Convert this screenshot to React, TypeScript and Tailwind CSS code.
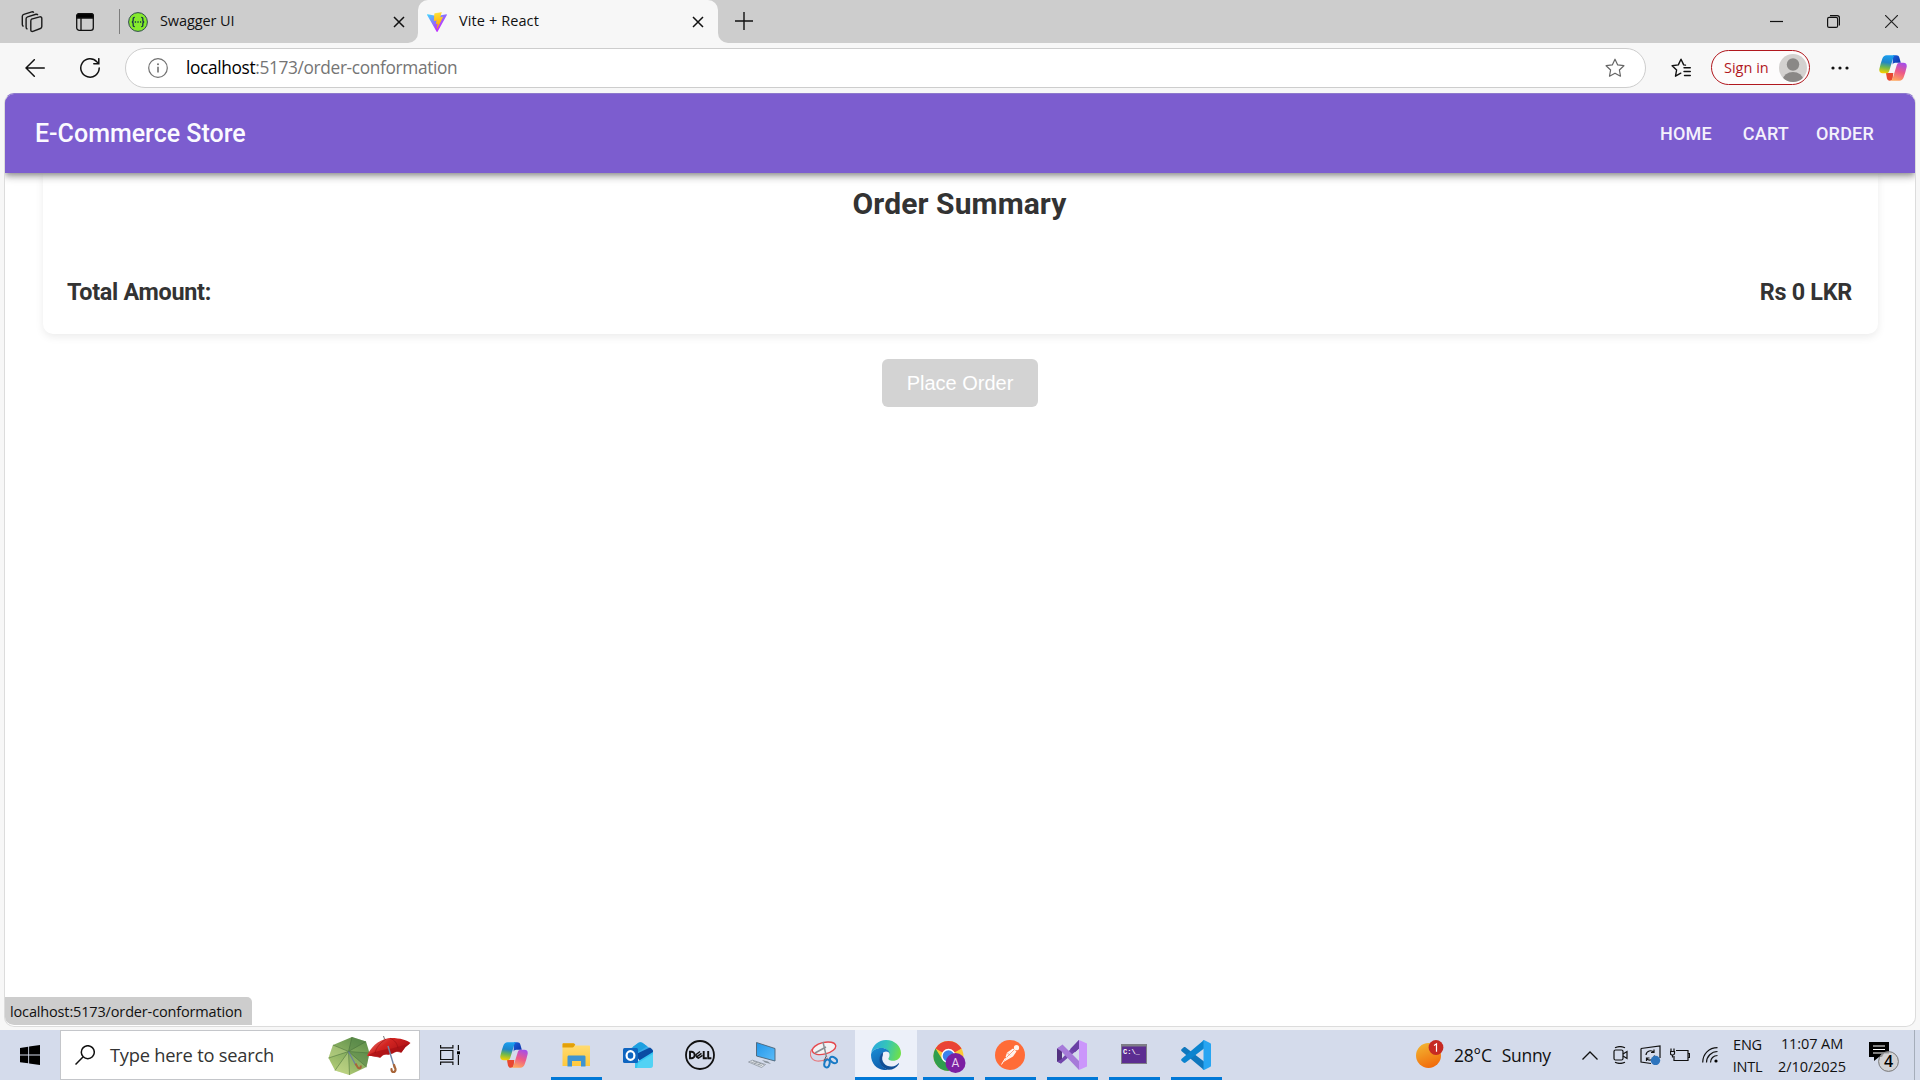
import type { ReactNode } from "react";

const ui = "font-['Open_Sans','Noto_Sans',sans-serif]";

function CopilotIcon({ id, className }: { id: string; className: string }) {
  return (
    <svg viewBox="0 0 28 26" className={className}>
      <defs>
        <linearGradient id={`${id}a`} x1="0.5" y1="0" x2="0.35" y2="1">
          <stop offset="0" stopColor="#1a9ff0" />
          <stop offset="0.4" stopColor="#1f86c9" />
          <stop offset="0.68" stopColor="#6fb84e" />
          <stop offset="1" stopColor="#f5d000" />
        </linearGradient>
        <linearGradient id={`${id}b`} x1="0.7" y1="0" x2="0.35" y2="1">
          <stop offset="0" stopColor="#a64ee8" />
          <stop offset="0.5" stopColor="#ee5a86" />
          <stop offset="1" stopColor="#ffa85c" />
        </linearGradient>
        <linearGradient id={`${id}c`} x1="0" y1="0" x2="1" y2="1">
          <stop offset="0" stopColor="#1c5fd8" />
          <stop offset="1" stopColor="#0b2fa8" />
        </linearGradient>
      </defs>
      <path d="M14 0.3h3.2c1.7 0 2.7.8 3.2 2.4l1.4 5.1h-5.6c-1.2 0-2.2.7-2.6 1.9z" fill={`url(#${id}c)`} />
      <path d="M8.5 18h5.8l-.6 5c-.3 1.7-1.2 2.7-3 2.7-1.5 0-2.4-.9-2.8-2.4L7 18z" fill="#e8472f" />
      <path d="M7.6.3H17c-1.5 0-2.3 1-2.8 2.6l-4 13c-.5 1.6-1.4 2.3-3 2.3H3.6C1 18.2-.2 16.5.4 13.7c.7-3.2 1.7-6.7 2.9-10C4.1 1.5 5.5.3 7.6.3z" fill={`url(#${id}a)`} />
      <path d="M20.4 25.7H11c1.5 0 2.3-1 2.8-2.6l4-13c.5-1.6 1.4-2.3 3-2.3h3.6c2.6 0 3.8 1.7 3.2 4.5-.7 3.2-1.7 6.7-2.9 10-.8 2.2-2.2 3.4-4.3 3.4z" fill={`url(#${id}b)`} />
    </svg>
  );
}

function CloseX({ className }: { className: string }) {
  return (
    <svg viewBox="0 0 12 12" className={className} fill="none" stroke="#111" strokeWidth="1.5">
      <path d="M1 1l10 10M11 1L1 11" />
    </svg>
  );
}

function TabStrip() {
  return (
    <div className="flex h-[43px] shrink-0 bg-[#cdcdcd]">
      <div className="flex w-[119px] items-center pl-[21px]">
        <svg viewBox="0 0 22 22" className="h-[22px] w-[22px]" fill="none" stroke="#1b1b1b" strokeWidth="1.4">
          <path d="M10.5 8.2l8.2-2.3c1.2-.3 2.1.3 2.1 1.5v8.2c0 1-.5 1.7-1.4 1.9l-7.5 2.9c-1.2.4-2.1-.2-2.1-1.5v-8.6c0-1.1.3-1.8.7-2.1z" />
          <path d="M6.5 18.2c-1-.3-1.4-1-1.4-2V7.8c0-1 .5-1.7 1.5-2l8.3-2.5c.9-.2 1.6.1 1.9.8" />
          <path d="M2.6 15.3c-.9-.3-1.3-.9-1.3-1.9V5.3c0-1 .5-1.7 1.5-2l8-2.4c.9-.2 1.6.1 1.9.8" />
        </svg>
        <svg viewBox="0 0 18 18" className="ml-[33px] h-[18px] w-[18px]" fill="none" stroke="#111" strokeWidth="1.3">
          <rect x="0.7" y="0.7" width="16.6" height="16.6" rx="2.6" />
          <path d="M.7 5V3A2.3 2.3 0 013 .7h12A2.3 2.3 0 0117.3 3v2z" fill="#000" />
          <path d="M5 5v12.3" />
        </svg>
      </div>
      <div className="mt-[9px] h-[25px] w-px bg-[#7d7d7d]" />
      <div className="flex w-[298px] items-center pl-2">
        <svg viewBox="0 0 20 20" className="mt-px h-5 w-5">
          <circle cx="10" cy="10" r="9.4" fill="#85ea2d" stroke="#2f4a52" strokeWidth="1" />
          <g fill="none" stroke="#173647" strokeWidth="1.3">
            <path d="M6.8 5.3c-1.5 0-1.7.7-1.6 2 .1 1.4 0 2.5-1.3 2.7 1.3.2 1.4 1.3 1.3 2.7-.1 1.3.1 2 1.6 2" />
            <path d="M13.2 5.3c1.5 0 1.7.7 1.6 2-.1 1.4 0 2.5 1.3 2.7-1.3.2-1.4 1.3-1.3 2.7.1 1.3-.1 2-1.6 2" />
          </g>
          <path d="M6.8 10h1.3M9.4 10h1.3M12 10h1.2" stroke="#173647" strokeWidth="1.3" />
        </svg>
        <span className={`${ui} ml-3 -mt-px grow text-[14.5px] tracking-[-0.1px] text-[#111]`}>Swagger UI</span>
        <CloseX className="mr-[13px] mt-px h-3 w-3" />
      </div>
      <div className="relative flex w-[300px] items-center rounded-t-[10px] bg-[#f7f7f7] pl-[9px]">
        <div className="absolute -left-[10px] bottom-0 h-[10px] w-[10px] bg-[#f7f7f7]">
          <div className="h-full w-full rounded-br-[10px] bg-[#cdcdcd]" />
        </div>
        <div className="absolute -right-[10px] bottom-0 h-[10px] w-[10px] bg-[#f7f7f7]">
          <div className="h-full w-full rounded-bl-[10px] bg-[#cdcdcd]" />
        </div>
        <svg viewBox="0 0 256 257" className="mt-px h-5 w-5">
          <defs>
            <linearGradient id="vite1" x1="-.828%" x2="57.636%" y1="7.652%" y2="78.411%">
              <stop offset="0%" stopColor="#41D1FF" />
              <stop offset="100%" stopColor="#BD34FE" />
            </linearGradient>
            <linearGradient id="vite2" x1="43.376%" x2="50.316%" y1="2.242%" y2="89.030%">
              <stop offset="0%" stopColor="#FFEA83" />
              <stop offset="8.333%" stopColor="#FFDD35" />
              <stop offset="100%" stopColor="#FFA800" />
            </linearGradient>
          </defs>
          <path fill="url(#vite1)" d="M255.153 37.938L134.897 252.976c-2.483 4.44-8.862 4.466-11.382.048L.875 37.958c-2.746-4.814 1.371-10.646 6.827-9.67l120.385 21.517a6.537 6.537 0 0 0 2.322-.004l117.867-21.483c5.438-.991 9.574 4.796 6.877 9.62Z" />
          <path fill="url(#vite2)" d="M185.432.063L96.44 17.501a3.268 3.268 0 0 0-2.634 3.014l-5.474 92.456a3.268 3.268 0 0 0 3.997 3.378l24.777-5.718c2.318-.535 4.413 1.507 3.936 3.838l-7.361 36.047c-.495 2.426 1.782 4.5 4.151 3.78l15.304-4.649c2.372-.72 4.652 1.36 4.15 3.788l-11.698 56.621c-.732 3.542 3.979 5.473 5.943 2.437l1.313-2.028l72.516-144.72c1.215-2.423-.88-5.186-3.54-4.672l-25.505 4.922c-2.396.462-4.435-1.77-3.759-4.114l16.646-57.705c.677-2.35-1.37-4.583-3.769-4.113Z" />
        </svg>
        <span className={`${ui} ml-3 -mt-px grow text-[14.5px] tracking-[0.1px] text-[#111]`}>Vite + React</span>
        <CloseX className="mr-[14px] mt-px h-3 w-3" />
      </div>
      <div className="flex grow items-center pl-[17px]">
        <svg viewBox="0 0 18 18" className="-mt-[2px] h-[18px] w-[18px]" stroke="#111" strokeWidth="1.4">
          <path d="M9 0v18M0 9h18" />
        </svg>
      </div>
      <div className="flex w-[150px] items-center">
        <svg viewBox="0 0 13 13" className="h-[13px] w-[13px]" stroke="#111" strokeWidth="1.2">
          <path d="M0 6.5h13" />
        </svg>
        <svg viewBox="0 0 13 13" className="ml-11 h-[13px] w-[13px]" fill="none" stroke="#111" strokeWidth="1.2">
          <rect x="0.6" y="2.4" width="10" height="10" rx="1.5" />
          <path d="M3 .6h7.2a2.2 2.2 0 012.2 2.2V10.5" />
        </svg>
        <svg viewBox="0 0 13 13" className="ml-[45px] h-[13px] w-[13px]" stroke="#222" strokeWidth="1.2">
          <path d="M0 0l13 13M13 0L0 13" />
        </svg>
      </div>
    </div>
  );
}

const starPath = "M10 1.2l2.7 5.7 6.2.8-4.5 4.3 1.1 6.2L10 15.2l-5.5 3 1.1-6.2L1.1 7.7l6.2-.8z";

function Toolbar() {
  return (
    <div className="flex h-[50px] shrink-0 items-center bg-[#f7f7f7]">
      <svg viewBox="0 0 20 18" className="ml-[25px] h-[18px] w-5" fill="none" stroke="#111" strokeWidth="1.5" strokeLinecap="round">
        <path d="M19.3 9H1M9.3.7L1 9l8.3 8.3" />
      </svg>
      <svg viewBox="0 0 20 20" className="ml-[35px] h-5 w-5" fill="none" stroke="#111" strokeWidth="1.5" strokeLinecap="round">
        <path d="M19.2 10A9.2 9.2 0 1116.8 3.8L18.5 5.5M18.8.7v5.1h-5" />
      </svg>
      <div className="ml-[25px] flex h-10 w-[1521px] items-center rounded-full border border-[#cdcdcd] bg-white">
        <svg viewBox="0 0 20 20" className="ml-[22px] h-5 w-5" fill="none" stroke="#717171" strokeWidth="1.2">
          <circle cx="10" cy="10" r="9.3" />
          <path d="M10 8.8v5.7" strokeWidth="1.6" />
          <circle cx="10" cy="6.2" r="1" fill="#717171" stroke="none" />
        </svg>
        <span className={`${ui} ml-[18px] grow text-[17.3px] leading-6 tracking-[-0.35px] text-[#757575]`}>
          <span className="text-black">localhost</span>:5173/order-conformation
        </span>
        <svg viewBox="0 0 20 20" className="mr-5 h-5 w-5" fill="none" stroke="#666" strokeWidth="1.2" strokeLinejoin="round">
          <path d={starPath} />
        </svg>
      </div>
      <svg viewBox="0 0 20 20" className="ml-[25px] h-5 w-5" fill="none" stroke="#111" strokeWidth="1.4" strokeLinejoin="round" strokeLinecap="round">
        <path d="M9.8 15.2l-5.3 3 1.1-6.2L1.1 7.7l6.2-.8L10 1.2l2.7 5.7 1.8.2M13 9.8h6.3M13 13.5h6.3M13.5 17.5h5.8" />
      </svg>
      <div className="-mt-px ml-5 flex h-[35px] w-[99px] items-center rounded-full border border-[#b1181e] bg-[#fdfcfc]">
        <span className={`${ui} ml-3 w-[55px] whitespace-nowrap text-[14.5px] text-[#b1181e]`}>Sign in</span>
        <svg viewBox="0 0 28 28" className="h-7 w-7">
          <defs>
            <clipPath id="avatar"><circle cx="14" cy="14" r="14" /></clipPath>
          </defs>
          <g clipPath="url(#avatar)">
            <rect width="28" height="28" fill="#d3d1cf" />
            <circle cx="14" cy="10.5" r="6.2" fill="#8a8886" />
            <ellipse cx="14" cy="25.5" rx="10" ry="7.5" fill="#8a8886" />
          </g>
        </svg>
      </div>
      <svg viewBox="0 0 18 4" className="ml-[21px] h-1 w-[18px]" fill="#111">
        <circle cx="2" cy="2" r="1.6" /><circle cx="9" cy="2" r="1.6" /><circle cx="16" cy="2" r="1.6" />
      </svg>
      <CopilotIcon id="cpt" className="ml-[30px] h-[26px] w-7" />
    </div>
  );
}

function StorePage() {
  return (
    <div className="h-[937px] shrink-0 bg-[#f7f7f7] px-1 pb-[3px]">
      <div className="relative flex h-[934px] flex-col overflow-hidden rounded-[10px] border border-[#dcdcdc] border-t-[#8d79cc] bg-white font-[Roboto,sans-serif]">
        <header className="z-10 flex h-[79px] shrink-0 items-center bg-[#7c5dcf] pl-[30px] pr-[41px] shadow-[0_2px_5px_-1px_rgba(0,0,0,0.3),0_5px_6px_0_rgba(0,0,0,0.16),0_1px_12px_0_rgba(0,0,0,0.14)]">
          <h1 className="text-[25px] font-medium text-[#fbfaff]">E-Commerce Store</h1>
          <nav className="ml-auto flex text-[18px] font-medium tracking-[0.2px] text-[#f4f1fc]">
            <a>HOME</a>
            <a className="ml-[31px]">CART</a>
            <a className="ml-[27px]">ORDER</a>
          </nav>
        </header>
        <main className="pl-[38px] pr-[37px] text-[#333]">
          <section className="h-[161px] rounded-b-[10px] bg-white pl-6 pr-[26px] pt-[13px] shadow-[0_3px_8px_rgba(0,0,0,0.08)]">
            <h2 className="text-center text-[30px] font-bold leading-9 tracking-[0.1px]">Order Summary</h2>
            <div className="mt-14 flex justify-between text-[23.4px] font-bold leading-7 tracking-[-0.28px]">
              <span>Total Amount:</span>
              <span>Rs 0 LKR</span>
            </div>
          </section>
          <div className="mr-px mt-[25px] flex justify-center">
            <button className="h-12 w-[156px] rounded-md bg-[#d3d3d3] font-['Liberation_Sans',sans-serif] text-[20px] text-white">Place Order</button>
          </div>
        </main>
        <div className={`${ui} absolute -left-px bottom-px flex h-7 w-[248px] items-center rounded-bl-[10px] rounded-tr-[5px] bg-[#cdcdcd] pl-[6px] text-[14.5px] tracking-[-0.15px] text-[#111]`}>
          <span className="mt-px whitespace-nowrap">localhost:5173/order-conformation</span>
        </div>
      </div>
    </div>
  );
}

function Slot({ children, active, running, className = "" }: { children: ReactNode; active?: boolean; running?: boolean; className?: string }) {
  return (
    <div className={`relative flex h-[50px] w-[62px] items-center justify-center ${active ? "bg-[#ecf0f9]" : ""} ${className}`}>
      {children}
      {active && <div className="absolute inset-x-0 bottom-0 h-[3px] bg-[#0078d7]" />}
      {running && <div className="absolute bottom-0 left-[6px] h-[3px] w-[51px] bg-[#0078d7]" />}
    </div>
  );
}

function Umbrellas() {
  return (
    <svg viewBox="0 0 84 40" className="mt-[2px] h-10 w-[84px]">
      <defs>
        <linearGradient id="um1" x1="0.8" y1="0" x2="0.2" y2="1">
          <stop offset="0" stopColor="#5d8f4a" /><stop offset="1" stopColor="#b6cf78" />
        </linearGradient>
        <linearGradient id="um2" x1="0" y1="0" x2="1" y2="0.6">
          <stop offset="0" stopColor="#e9837a" /><stop offset="0.45" stopColor="#d32522" /><stop offset="1" stopColor="#a80d12" />
        </linearGradient>
      </defs>
      <path d="M24 1l14 4.5 3.5 11.5-3 14L21.5 39 7 34.5 0.5 22 5 9z" fill="url(#um1)" />
      <path d="M20.5 15.5L24 1l14 4.5zM20.5 15.5L41.5 17l-3 14z" fill="#4d7f45" opacity="0.45" />
      <path d="M20.5 15.5L5 9 .5 22zM20.5 15.5L7 34.5 21.5 39z" fill="#d5e39c" opacity="0.35" />
      <path d="M20.5 15.5L24 1M20.5 15.5L38 5.5M20.5 15.5l21 1.5M20.5 15.5l18 15.5M20.5 15.5l1 23.5M20.5 15.5L7 34.5M20.5 15.5L.5 22M20.5 15.5L5 9" stroke="#426b38" strokeWidth="0.5" />
      <path d="M20.5 15.5l7.5 14" stroke="#6b7fa0" strokeWidth="1.2" />
      <path d="M27.5 27.5l2 3.5c1.5 2.5 4 1 3-1.5" fill="none" stroke="#a8663a" strokeWidth="2" />
      <path d="M39 20C42 12 50 4 60 2.200 70 1.500 79 4 82.500 7l-5 4-4 5.500c-3-1.500-6-1-8 .5l-5 1.500c-3-1-6 0-8 3-3-1-8-1.500-13.500-1.500z" fill="url(#um2)" />
      <path d="M40 19c8-4 17-6 24-6.500 7-2 13-4 18-5l-5 4-4 5.500c-3-1.500-6-1-8 .5l-5 1.500c-3-1-6 0-8 3-3-1-7-1.500-12-3z" fill="#a50f14" opacity="0.65" />
      <path d="M58 3C52 7 48 12 47 17M62 2.200c5 2 7 5 8 10" fill="none" stroke="#8c0d10" strokeWidth="0.5" />
      <path d="M55.500 0l1 3" stroke="#777" strokeWidth="1" />
      <path d="M60 10l6.5 22" stroke="#6f86a8" strokeWidth="1.4" />
      <path d="M66 29l1.500 4c.4 4-4.500 4-4 0" fill="none" stroke="#a8663a" strokeWidth="2.2" strokeLinecap="round" />
    </svg>
  );
}

function Taskbar() {
  return (
    <div className={`${ui} flex h-[50px] shrink-0 bg-[#d4dbeb] text-[#111]`}>
      <div className="flex w-[60px] items-center justify-center">
        <svg viewBox="0 0 20 20" className="h-5 w-5">
          <path d="M0 2.9L8.2 1.8v7.8H0zM9.1 1.6L20 0v9.5H9.1zM0 10.5h8.2v7.8L0 17.2zM9.1 10.5H20V20L9.1 18.5z" />
        </svg>
      </div>
      <div className="flex w-[360px] items-center border border-[#c4c6ca] bg-white pl-[14px]">
        <svg viewBox="0 0 20 20" className="h-5 w-5" fill="none" stroke="#111" strokeWidth="1.5">
          <circle cx="12.8" cy="7.2" r="6.5" />
          <path d="M8.2 11.8L.5 19.5" />
        </svg>
        <span className="ml-[15px] w-[218px] shrink-0 whitespace-nowrap text-[18.3px] tracking-[-0.22px] text-[#333]">Type here to search</span>
        <Umbrellas />
      </div>
      <div className="flex w-[63px] items-center pl-5">
        <svg viewBox="0 0 20 20" className="-mt-px h-5 w-5" fill="none" stroke="#111" strokeWidth="1.2">
          <path d="M.6 5.5h12.3v9H.6zM.6 0v2.8h12.3V0M.6 20v-2.8h12.3V20M18.4 0v5M18.4 10v10" />
          <rect x="17" y="6.3" width="3" height="3" fill="#000" stroke="none" />
        </svg>
      </div>
      <Slot><CopilotIcon id="cpb" className="h-[26px] w-7" /></Slot>
      <Slot running>
        <svg viewBox="0 0 28 24" className="h-6 w-7">
          <defs><linearGradient id="fold" x1="0" y1="0" x2="0" y2="1"><stop offset="0" stopColor="#ffdd77" /><stop offset="1" stopColor="#ffc83c" /></linearGradient></defs>
          <path d="M.5 1.2C.5.5 1 .3 1.5.3H11l2.5 2.2H27c.6 0 1 .3 1 1V23H.5z" fill="url(#fold)" />
          <path d="M.5 1.2C.5.5 1 .3 1.5.3H11c1 0 1.5.5 2.3 1.2L12 3.5c-.5.8-1 1-2 1H.5z" fill="#e3a008" />
          <path d="M5.500 23.5V14c0-1 .5-1.5 1.5-1.5h15c1 0 1.5.5 1.5 1.5v9.5H19V18h-9v5.5z" fill="#3f94d1" />
        </svg>
      </Slot>
      <Slot>
        <svg viewBox="0 0 30 26" className="h-[26px] w-[30px]">
          <path d="M5 8.5L15.5.8c1.3-.9 2.5-.9 3.8 0L30 8.5V20L18 17 5 14z" fill="#38a9e8" />
          <path d="M10 4.8l5.5-4c1.3-.9 2.5-.9 3.8 0L24 4.3 12 12z" fill="#1d9fe0" />
          <path d="M12 12.5L27 5.500c1 .8 3 2 3 3.500v2L17 19z" fill="#0a4ca3" />
          <path d="M12 21l5-3 13-8v13c0 1.800-1 3-3 3H12z" fill="#35c5f2" />
          <path d="M15 21l15-9v11c0 1.800-1 3-3 3H14z" fill="#7ce5f8" opacity="0.4" />
          <rect x="0" y="6" width="15" height="15" rx="1.5" fill="#0f65c0" />
          <ellipse cx="7.5" cy="13.5" rx="3.9" ry="4.3" fill="none" stroke="#fff" strokeWidth="2.2" />
        </svg>
      </Slot>
      <Slot>
        <svg viewBox="0 0 30 30" className="h-[30px] w-[30px]" fill="none" stroke="#111">
          <circle cx="15" cy="15" r="14" strokeWidth="1.8" />
          <g strokeWidth="1.9">
            <path d="M5 11.7v6.6h1.4a3.3 3.3 0 000-6.6zM18.7 11v7.300h3.200M23.200 11v7.300h3.200" />
            <path d="M10.5 15l4.5-3.5M11 17.3l5.5-4M13 18.5l4.5-3.2M10.5 15l3 3.5" strokeWidth="1.5" />
          </g>
        </svg>
      </Slot>
      <Slot>
        <svg viewBox="0 0 28 26" className="h-[26px] w-7">
          <defs><linearGradient id="pc" x1="0" y1="0" x2="1" y2="1"><stop offset="0" stopColor="#2196ea" /><stop offset="1" stopColor="#5cbcf8" /></linearGradient></defs>
          <path d="M8.500 .5l18.500 6v12.500L8.500 14z" fill="url(#pc)" stroke="#4c6377" strokeWidth="0.9" />
          <path d="M14 18l6 1.5 3 2.5-6-1.5z" fill="#8a949d" />
          <path d="M.5 20l4-1.8 13 4.3-4 3z" fill="#e0e4e8" stroke="#848d96" strokeWidth="0.7" />
          <path d="M3 20l11 3.7M5 19l11 3.7M6 22l3-2M10 23.2l3-2" stroke="#848d96" strokeWidth="0.6" />
        </svg>
      </Slot>
      <Slot>
        <svg viewBox="0 0 28 28" className="h-7 w-7" fill="none">
          <path d="M2 8C-1 12 0 19 7 20c5 .5 8-1 11-3" stroke="#e67a7f" strokeWidth="1.2" />
          <ellipse cx="14" cy="7.3" rx="12" ry="5.8" transform="rotate(-14 14 7.3)" fill="#f3f3f5" stroke="#e5484d" strokeWidth="1.4" />
          <path d="M13 1l3.5 15M5 12l11-6" stroke="#8b8f94" strokeWidth="1.5" />
          <path d="M16 15.5l-2.2 5" stroke="#555" />
          <ellipse cx="17" cy="22.5" rx="2.6" ry="4" transform="rotate(15 17 22.5)" stroke="#1a7ac4" strokeWidth="2" />
          <ellipse cx="23.5" cy="19" rx="4" ry="2.6" transform="rotate(35 23.5 19)" stroke="#1a7ac4" strokeWidth="2" />
        </svg>
      </Slot>
      <Slot active>
        <svg viewBox="0 0 30 30" className="h-[30px] w-[30px]">
          <defs>
            <linearGradient id="ed1" x1="0" y1="0.3" x2="1" y2="0.5"><stop offset="0" stopColor="#2aa8e0" /><stop offset="0.5" stopColor="#35c5b8" /><stop offset="1" stopColor="#6fe04a" /></linearGradient>
            <linearGradient id="ed2" x1="0" y1="0" x2="0.5" y2="1"><stop offset="0" stopColor="#1a8fd6" /><stop offset="1" stopColor="#0f5cab" /></linearGradient>
          </defs>
          <path d="M.2 13.5C1 5.5 7.5 0 15 0c9 0 15 6.5 15 13 0 5-3.8 7.8-8 7.8-3.5 0-5.2-1.2-4.5-2.5C20 15 18 8 10.5 8 5 8 1 10.5.2 13.5z" fill="url(#ed1)" />
          <path d="M.1 14C1 10.5 5 8 10.5 8c4.5 0 7.8 2.5 8.5 6-1-1.8-2.5-2.5-4-2.5-2.5 0-6 3-6 8 0 5 3.5 9 8.5 10.3C8 31.5 0 25 0 15z" fill="url(#ed2)" />
          <path d="M11.9 15c-3 7 3.5 12 9 11.5 2.8-.2 5.1-1.5 6.4-3 .6-.7 1 0 .7.5C25.5 28 21.5 30 17.5 29.8 12 28.5 8.5 24.5 8.5 19.5c0-3.5 1.5-6 3.5-7z" fill="#124f96" />
        </svg>
      </Slot>
      <Slot running>
        <svg viewBox="0 0 34 32" className="ml-[3px] mt-[3px] h-8 w-[34px]">
          <circle cx="15.5" cy="15" r="15" fill="#fcc934" />
          <path d="M15.5 15L2.5 7.5A15 15 0 0115.5 0c5.5 0 10.5 3 13 7.5z" fill="#ea4335" />
          <path d="M2.5 7.5A15 15 0 0015.5 30l6.5-11.3H15L9 18z" fill="#2f9e4d" />
          <circle cx="15.5" cy="15" r="7.2" fill="#fff" />
          <circle cx="15.5" cy="15" r="5.8" fill="#3b82ec" />
          <circle cx="22.5" cy="22" r="10" fill="#7b1fa2" />
          <text x="22.5" y="26.2" textAnchor="middle" fontSize="12" fill="#e9d5f0" fontFamily="Roboto">A</text>
        </svg>
      </Slot>
      <Slot running>
        <svg viewBox="0 0 30 30" className="h-[30px] w-[30px]">
          <circle cx="15" cy="15" r="15" fill="#ff6c37" />
          <circle cx="21.5" cy="7.7" r="2.6" fill="#fff3ec" />
          <path d="M12 12.5l6-4 3.5 3-3.5 5L8.5 22l3-4.5-1-.5z" fill="#fff3ec" />
          <path d="M10.5 18L6.5 24.5M18 9l-4.5 8" stroke="#fff" strokeWidth="1" />
          <path d="M19 10l-7 7M12 12.5l3 3" stroke="#ff6c37" strokeWidth="0.6" />
        </svg>
      </Slot>
      <Slot running>
        <svg viewBox="0 0 30 30" className="h-[30px] w-[30px]">
          <path d="M0 8.5L4 6.5 5 9v12l-1 2.5-4-2z" fill="#52317f" />
          <path d="M0 21.5l4 2L22 8.5V0L4 19.5z" fill="#7347ad" />
          <path d="M22 8.5V0L13 9.3l5 3z" fill="#6a3fa5" />
          <path d="M0 8.5l5.500-4L22 21v9L4 11z" fill="#a67ad9" />
          <path d="M22 0l8 3.500v23L22 30z" fill="#cb96fb" />
        </svg>
      </Slot>
      <Slot running>
        <svg viewBox="0 0 26 20" className="-mt-[2px] h-5 w-[26px]">
          <rect width="26" height="20" fill="#7e7e86" />
          <rect x="1" y="2.5" width="24" height="16.5" fill="#5c2d91" />
          <text x="2" y="9.5" fontSize="7" fontWeight="700" fill="#fff" fontFamily="Liberation Mono">C:\_</text>
        </svg>
      </Slot>
      <Slot running>
        <svg viewBox="0 0 30 30" className="h-[30px] w-[30px]">
          <path d="M.5 9.3l2-1.8c.7-.6 1.5-.6 2.2 0L23 21.5V30L.7 11.3c-.7-.6-.7-1.4-.2-2z" fill="#0f77bd" />
          <path d="M.5 20.7l2 1.8c.7.6 1.5.6 2.2 0L23 8.5V0L.7 18.7c-.7.6-.7 1.4-.2 2z" fill="#0b84cf" />
          <path d="M21.5.5C22 0 22.500-.2 23 .1l6 2.800c.7.3 1 .8 1 1.500v21.200c0 .7-.3 1.200-1 1.500l-6 2.800c-.5.2-1 .1-1.500-.4.500.3 1 0 1-.7V1.200c0-.7-.5-1-1-.7z" fill="#27a5f2" />
        </svg>
      </Slot>
      <div className="flex grow items-center pl-[189px]">
        <svg viewBox="0 0 28 28" className="mb-[2px] h-7 w-7">
          <defs><linearGradient id="sun" x1="0.2" y1="0" x2="0.6" y2="1"><stop offset="0" stopColor="#f2b632" /><stop offset="1" stopColor="#f26a0a" /></linearGradient></defs>
          <circle cx="12.5" cy="15.5" r="12.5" fill="url(#sun)" />
          <circle cx="20" cy="7.5" r="7.4" fill="#c62a22" />
          <path d="M18 5.500l2.500-1.700v8" fill="none" stroke="#fff" strokeWidth="1.2" />
        </svg>
        <span className="ml-[10px] mt-px whitespace-nowrap text-[17.5px] tracking-[-0.2px]">28°C</span>
        <span className="ml-[10px] mt-px whitespace-nowrap text-[17.5px] tracking-[-0.3px]">Sunny</span>
      </div>
      <div className="flex w-[338px] items-center">
        <svg viewBox="0 0 16 9" className="h-[9px] w-4" fill="none" stroke="#111" strokeWidth="1.3"><path d="M.5 8.500L8 1l7.500 7.500" /></svg>
        <svg viewBox="0 0 16 18" className="ml-[15px] h-[18px] w-4" fill="none" stroke="#111" strokeWidth="1.2">
          <rect x="1" y="4" width="9" height="10" rx="1.5" /><path d="M10 8l4-2.500v7L10 10M2 1.800C5 .3 9 .3 12 1.800M2 16.300c3 1.400 7 1.400 10 0" />
        </svg>
        <svg viewBox="0 0 21 20" className="ml-[11px] h-5 w-[21px]" fill="none" stroke="#111" strokeWidth="1.2">
          <path d="M1 3.500L20 1v12M1 3.500V17l10 1.500" /><path d="M6 10a4.500 4.500 0 018-2.500M14 4.500v3h-3M14.500 10.500a4.500 4.500 0 01-8 2.800M6.500 16v-3h3" />
          <circle cx="15.5" cy="15.5" r="4.7" fill="#2d74bd" stroke="none" />
        </svg>
        <svg viewBox="0 0 20 14" className="ml-[9px] h-[14px] w-5" fill="none" stroke="#111" strokeWidth="1.2">
          <path d="M6 2.500h12v10H4V8M18.500 5.500h1v4h-1M1 .5v3M4 .5v3M.5 3.500h4v2c0 1-.5 1.500-2 1.500s-2-.5-2-1.500zM2.500 7v2.500" />
        </svg>
        <svg viewBox="0 0 16 16" className="ml-3 h-4 w-4" fill="none" stroke="#111" strokeWidth="1.2">
          <path d="M.7 15.500C.7 7 7 .7 15.500.7M4.500 15.500c0-6 5-11 11-11M8.500 15.500c0-4 3-7 7-7" /><circle cx="14" cy="14" r="1.6" fill="#000" stroke="none" />
        </svg>
        <div className="ml-2 mt-px w-[43px] text-center text-[14.5px] leading-[22px] tracking-[-0.25px]"><span className="block">ENG</span><span className="block">INTL</span></div>
        <div className="ml-[3px] w-20 text-center text-[14.5px] leading-[23px] tracking-[-0.1px]"><span className="block">11:07 AM</span><span className="block">2/10/2025</span></div>
        <svg viewBox="0 0 31 31" className="ml-[17px] mt-[3px] h-[31px] w-[31px]">
          <path d="M0 1h20v15H10l-5 4v-4H0z" fill="#000" />
          <path d="M4 5h12M4 8.500h12M4 12h12" stroke="#fff" strokeWidth="1.2" />
          <circle cx="19.5" cy="20.5" r="9.9" fill="#d2d2d4" stroke="#777" strokeWidth="1" />
          <path d="M10.500 16H13l2-3.500h5V11c-5-1-8 2-9.500 5z" fill="#888" opacity="0.7" />
          <text x="19.5" y="26.2" textAnchor="middle" fontSize="16" fontWeight="600" fontFamily="Open Sans" fill="#000">4</text>
        </svg>
        <div className="ml-auto h-[50px] w-[6px] border-l border-[#a5adba]" />
      </div>
    </div>
  );
}

export default function App() {
  return (
    <div className="flex h-[1080px] w-[1920px] flex-col overflow-hidden">
      <TabStrip />
      <Toolbar />
      <StorePage />
      <Taskbar />
    </div>
  );
}
